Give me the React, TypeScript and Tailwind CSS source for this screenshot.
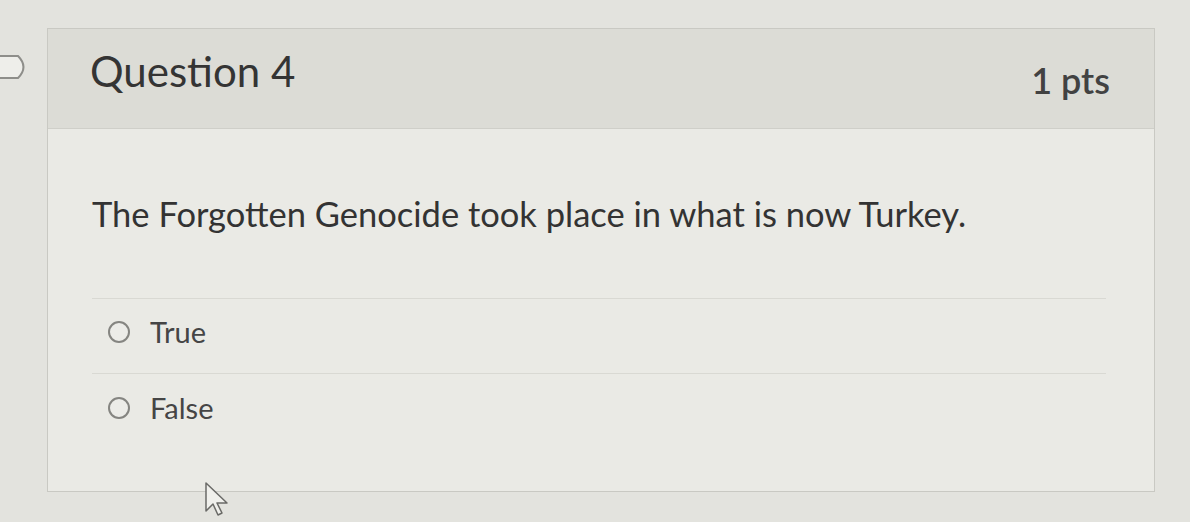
import React from "react";

const font = { fontFamily: "Lato, 'Open Sans', sans-serif" };

function Radio() {
  return (
    <span className="inline-block h-[22px] w-[22px] shrink-0 rounded-full border-[2px] border-[#858581] bg-[#ecece8]" />
  );
}

function Cursor() {
  return (
    <svg width="34" height="38" viewBox="0 0 34 38" className="absolute left-[203px] top-[482px]">
      <path
        d="M3 1 L3 29 L10 22 L15 33 L19 31 L14 21 L24 21 Z"
        fill="#f0f0ec"
        stroke="#6a6a67"
        strokeWidth="1.5"
        strokeLinejoin="round"
      />
    </svg>
  );
}

export default function App() {
  return (
    <div
      className="relative h-[522px] w-[1190px] overflow-hidden bg-[#e3e3de] pl-[47px] pt-[28px] text-[#333333]"
      style={font}
    >
      {/* partial nav control peeking from the left edge */}
      <svg width="34" height="30" viewBox="0 0 34 30" className="absolute left-0 top-[52px]">
        <path d="M0 4 L18 4 Q29 15 18 26 L0 26" fill="#eeeeea" stroke="#8e8e8a" strokeWidth="2" />
      </svg>

      <div className="flex h-[464px] w-[1108px] flex-col border border-[#c9c9c3] bg-[#eaeae5]">
        <div className="flex h-[100px] items-start justify-between border-b border-[#cfcfc9] bg-[#dcdcd6] pl-[42px] pr-[44px] pt-[17px]">
          <span className="text-[42px] leading-[50px] text-[#343434]">Question 4</span>
          <span className="mt-[9px] text-[36px] font-semibold leading-[50px] text-[#424242]">1 pts</span>
        </div>

        <div className="flex flex-col pl-[44px] pr-[48px]">
          <p className="mt-[63px] text-[34.5px] leading-[44px] text-[#333333]">
            The Forgotten Genocide took place in what is now Turkey.
          </p>

          <div className="mt-[62px] border-t border-[#d9d9d3]" />
          <label className="flex h-[74px] items-center gap-[20px] pb-[8px] pl-[16px]">
            <Radio />
            <span className="text-[29px] text-[#454545]">True</span>
          </label>
          <div className="border-t border-[#d9d9d3]" />
          <label className="flex h-[74px] items-center gap-[20px] pb-[6px] pl-[16px]">
            <Radio />
            <span className="text-[29px] text-[#454545]">False</span>
          </label>
        </div>
      </div>

      <Cursor />
    </div>
  );
}
